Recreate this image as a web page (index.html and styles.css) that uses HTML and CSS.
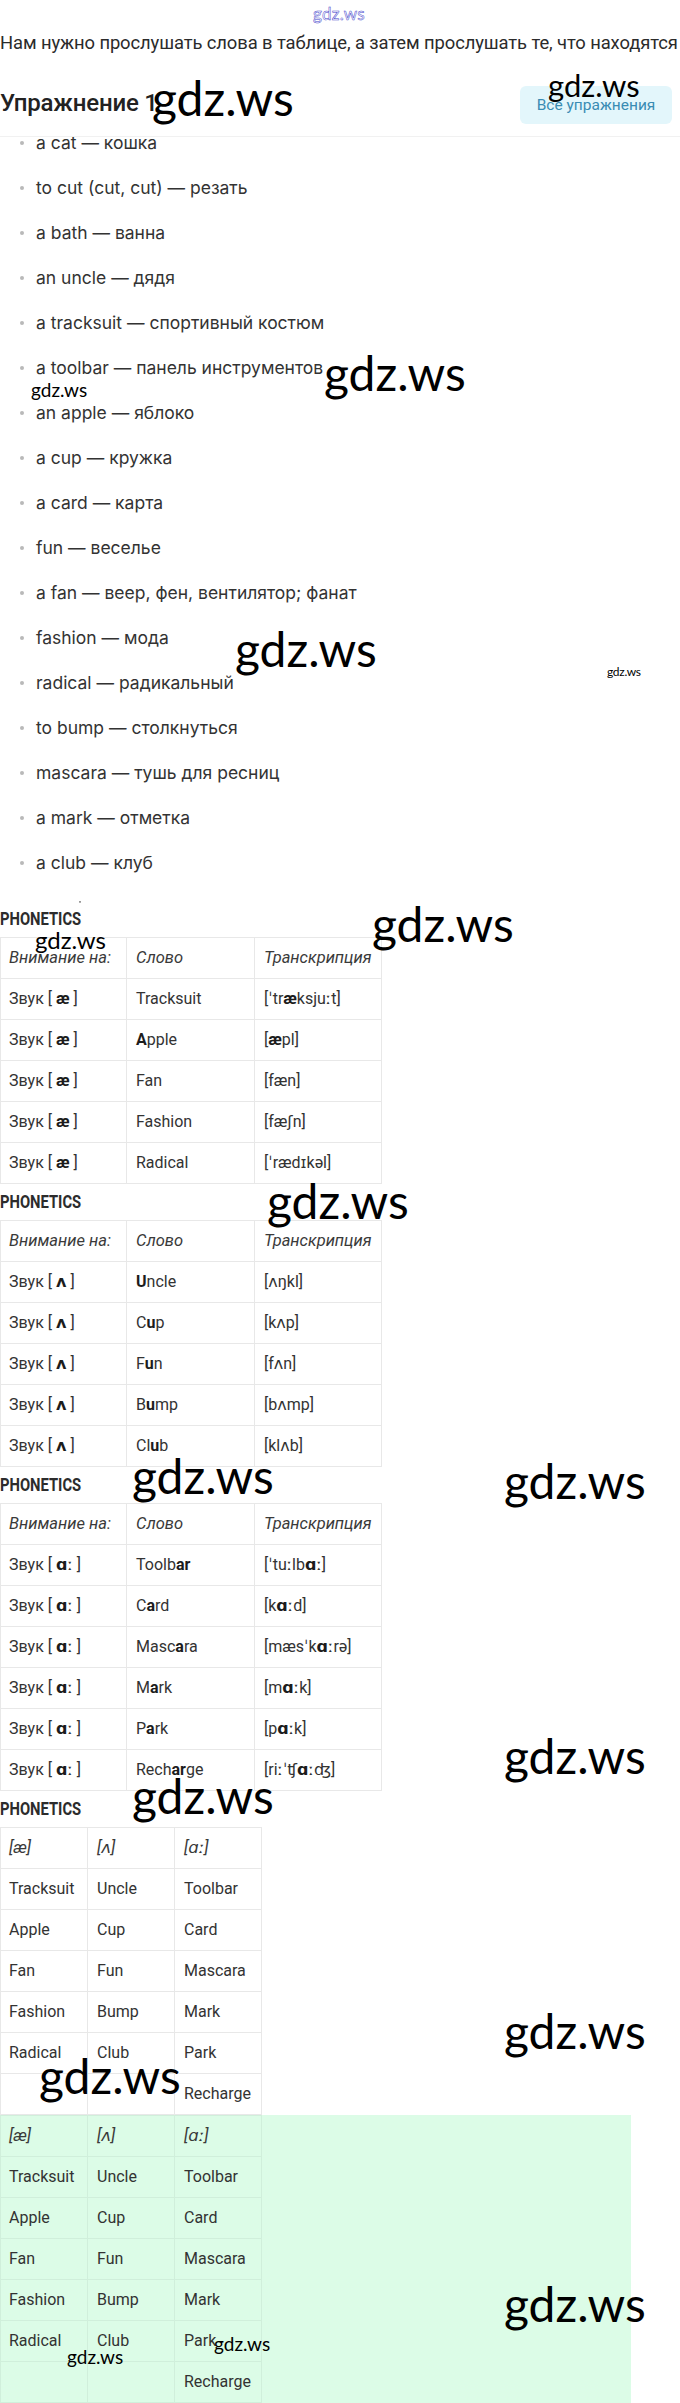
FILE: index.html
```html
<!DOCTYPE html>
<html lang="ru">
<head>
<meta charset="utf-8">
<title>Упражнение 1</title>
<link rel="stylesheet" href="styles.css">
</head>
<body>
<div class="page">
  <p class="intro">Нам нужно прослушать слова в таблице, а затем прослушать те, что находятся</p>
  <header class="bar">
    <h1 class="title">Упражнение 1</h1>
    <a class="btn">Все упражнения</a>
  </header>
  <ul class="words">
    <li>a cat — кошка</li>
    <li>to cut (cut, cut) — резать</li>
    <li>a bath — ванна</li>
    <li>an uncle — дядя</li>
    <li>a tracksuit — спортивный костюм</li>
    <li>a toolbar — панель инструментов</li>
    <li>an apple — яблоко</li>
    <li>a cup — кружка</li>
    <li>a card — карта</li>
    <li>fun — веселье</li>
    <li>a fan — веер, фен, вентилятор; фанат</li>
    <li>fashion — мода</li>
    <li>radical — радикальный</li>
    <li>to bump — столкнуться</li>
    <li>mascara — тушь для ресниц</li>
    <li>a mark — отметка</li>
    <li>a club — клуб</li>
  </ul>
  <div class="gap"><span class="speck"></span></div>

  <h2 class="ph"><span>PHONETICS</span></h2>
  <table class="tbl wide">
    <colgroup><col class="c1"><col class="c2"><col class="c3"></colgroup>
    <tr class="head"><td>Внимание на:</td><td>Слово</td><td>Транскрипция</td></tr>
    <tr><td>Звук [ <b>æ</b> ]</td><td>Tracksuit</td><td>[ˈtr<b>æ</b>ksjuːt]</td></tr>
    <tr><td>Звук [ <b>æ</b> ]</td><td><b>A</b>pple</td><td>[<b>æ</b>pl]</td></tr>
    <tr><td>Звук [ <b>æ</b> ]</td><td>Fan</td><td>[fæn]</td></tr>
    <tr><td>Звук [ <b>æ</b> ]</td><td>Fashion</td><td>[fæʃn]</td></tr>
    <tr><td>Звук [ <b>æ</b> ]</td><td>Radical</td><td>[ˈrædɪkəl]</td></tr>
  </table>

  <h2 class="ph"><span>PHONETICS</span></h2>
  <table class="tbl wide">
    <colgroup><col class="c1"><col class="c2"><col class="c3"></colgroup>
    <tr class="head"><td>Внимание на:</td><td>Слово</td><td>Транскрипция</td></tr>
    <tr><td>Звук [ <b>ʌ</b> ]</td><td><b>U</b>ncle</td><td>[ʌŋkl]</td></tr>
    <tr><td>Звук [ <b>ʌ</b> ]</td><td>C<b>u</b>p</td><td>[kʌp]</td></tr>
    <tr><td>Звук [ <b>ʌ</b> ]</td><td>F<b>u</b>n</td><td>[fʌn]</td></tr>
    <tr><td>Звук [ <b>ʌ</b> ]</td><td>B<b>u</b>mp</td><td>[bʌmp]</td></tr>
    <tr><td>Звук [ <b>ʌ</b> ]</td><td>Cl<b>u</b>b</td><td>[klʌb]</td></tr>
  </table>

  <h2 class="ph"><span>PHONETICS</span></h2>
  <table class="tbl wide">
    <colgroup><col class="c1"><col class="c2"><col class="c3"></colgroup>
    <tr class="head"><td>Внимание на:</td><td>Слово</td><td>Транскрипция</td></tr>
    <tr><td>Звук [ <b>ɑ</b>ː ]</td><td>Toolb<b>ar</b></td><td>[ˈtuːlb<b>ɑ</b>ː]</td></tr>
    <tr><td>Звук [ <b>ɑ</b>ː ]</td><td>C<b>a</b>rd</td><td>[k<b>ɑ</b>ːd]</td></tr>
    <tr><td>Звук [ <b>ɑ</b>ː ]</td><td>Masc<b>a</b>ra</td><td>[mæsˈk<b>ɑ</b>ːrə]</td></tr>
    <tr><td>Звук [ <b>ɑ</b>ː ]</td><td>M<b>a</b>rk</td><td>[m<b>ɑ</b>ːk]</td></tr>
    <tr><td>Звук [ <b>ɑ</b>ː ]</td><td>P<b>a</b>rk</td><td>[p<b>ɑ</b>ːk]</td></tr>
    <tr><td>Звук [ <b>ɑ</b>ː ]</td><td>Rech<b>ar</b>ge</td><td>[riːˈʧ<b>ɑ</b>ːʤ]</td></tr>
  </table>

  <h2 class="ph"><span>PHONETICS</span></h2>
  <table class="tbl narrow">
    <colgroup><col class="n"><col class="n"><col class="n"></colgroup>
    <tr class="head"><td>[æ]</td><td>[ʌ]</td><td>[ɑː]</td></tr>
    <tr><td>Tracksuit</td><td>Uncle</td><td>Toolbar</td></tr>
    <tr><td>Apple</td><td>Cup</td><td>Card</td></tr>
    <tr><td>Fan</td><td>Fun</td><td>Mascara</td></tr>
    <tr><td>Fashion</td><td>Bump</td><td>Mark</td></tr>
    <tr><td>Radical</td><td>Club</td><td>Park</td></tr>
    <tr><td></td><td></td><td>Recharge</td></tr>
  </table>

  <div class="green">
    <table class="tbl narrow mint">
      <colgroup><col class="n"><col class="n"><col class="n"></colgroup>
      <tr class="head"><td>[æ]</td><td>[ʌ]</td><td>[ɑː]</td></tr>
      <tr><td>Tracksuit</td><td>Uncle</td><td>Toolbar</td></tr>
      <tr><td>Apple</td><td>Cup</td><td>Card</td></tr>
      <tr><td>Fan</td><td>Fun</td><td>Mascara</td></tr>
      <tr><td>Fashion</td><td>Bump</td><td>Mark</td></tr>
      <tr><td>Radical</td><td>Club</td><td>Park</td></tr>
      <tr><td></td><td></td><td>Recharge</td></tr>
    </table>
  </div>

  <div class="marks" aria-hidden="true">
    <span class="wm top">gdz.ws</span>
    <span class="wm xl w2">gdz.ws</span>
    <span class="wm l w3">gdz.ws</span>
    <span class="wm xl w4">gdz.ws</span>
    <span class="wm s w5">gdz.ws</span>
    <span class="wm xl w6">gdz.ws</span>
    <span class="wm xs w7">gdz.ws</span>
    <span class="wm xl w8">gdz.ws</span>
    <span class="wm m w8b">gdz.ws</span>
    <span class="wm xl w9">gdz.ws</span>
    <span class="wm xl w10">gdz.ws</span>
    <span class="wm xl w11">gdz.ws</span>
    <span class="wm xl w12">gdz.ws</span>
    <span class="wm xl w13">gdz.ws</span>
    <span class="wm xl w14">gdz.ws</span>
    <span class="wm xl w15">gdz.ws</span>
    <span class="wm xl w16">gdz.ws</span>
    <span class="wm s w17">gdz.ws</span>
    <span class="wm s w18">gdz.ws</span>
  </div>
</div>
</body>
</html>
```

FILE: styles.css
```css
* { box-sizing: border-box; }
html, body { margin: 0; padding: 0; background: #fff; }
body { width: 680px; overflow: hidden; }

.page {
  position: relative;
  width: 680px;
  padding-top: 32px;
  color: #333;
  font-family: Roboto, "Noto Sans", sans-serif;
}

.intro {
  margin: 0;
  font-size: 18.4px;
  line-height: 22px;
  white-space: nowrap;
  color: #2b2b2b;
  letter-spacing: -0.1px;
}

.bar {
  position: relative;
  z-index: 1;
  margin-top: 16px;
  height: 67px;
  padding-right: 8px;
  display: flex;
  align-items: center;
  justify-content: space-between;
  background: #fff;
  border-bottom: 1px solid #f1f1f1;
}
.title {
  margin: 0;
  font-size: 24px;
  font-weight: 500;
  color: #222;
  letter-spacing: -0.2px;
}
.btn {
  display: flex;
  align-items: center;
  justify-content: center;
  width: 152px;
  height: 38px;
  margin-top: 4px;
  border-radius: 6px;
  background: #e3f6fb;
  color: #3a8cb3;
  font-size: 15.5px;
}

.words {
  list-style: none;
  margin: -17px 0 0;
  padding: 0 0 0 36px;
  font-family: Inter, "Noto Sans", sans-serif;
  font-size: 17.5px;
  color: #333;
}
.words li {
  position: relative;
  line-height: 25px;
  padding: 10px 0;
}
.words li::before {
  content: "";
  position: absolute;
  left: -16px;
  top: 21px;
  width: 4px;
  height: 4px;
  border-radius: 50%;
  background: #b9b9b9;
}

.gap { height: 16px; position: relative; }
.speck {
  display: block;
  margin-left: 79px;
  padding-top: 14px;
  width: 2px;
  height: 2px;
  box-sizing: content-box;
  background: transparent;
  border-bottom: 2px solid #999;
  border-radius: 1px;
}

.ph {
  margin: 0;
  height: 36px;
  line-height: 36px;
  font-size: 18px;
  font-weight: 700;
  color: #2c2c2c;
  white-space: nowrap;
}
.ph span {
  display: inline-block;
  transform: scaleX(0.82);
  transform-origin: left center;
}

.tbl {
  border-collapse: collapse;
  table-layout: fixed;
  font-family: Roboto, "DejaVu Sans", sans-serif;
  font-size: 16px;
  color: #333;
}
.tbl td {
  border: 1px solid #e8e8e8;
  padding: 10px 8px;
  line-height: 20px;
  height: 41px;
  white-space: nowrap;
  vertical-align: middle;
}
.tbl b { font-weight: 700; color: #1c1c1c; }
.tbl .head td { font-style: italic; color: #3a3a3a; font-size: 16.5px; }
.tbl td:nth-child(n+2) { padding-left: 9px; }

.wide { width: 381px; }
.wide .c1 { width: 126px; }
.wide .c2 { width: 128px; }
.wide .c3 { width: 127px; }

.narrow { width: 262px; }
.narrow .n { width: 87px; }

.green {
  width: 631px;
  background: #dcfce7;
}
.mint td { border-color: #d0efdb; }

/* watermarks laid over the page */
.marks { position: absolute; left: 0; top: 0; width: 680px; height: 2403px; pointer-events: none; z-index: 5; }
.wm {
  position: absolute;
  font-family: Lato, "Open Sans", sans-serif;
  line-height: 1;
  color: #000;
  white-space: nowrap;
}
.wm.top {
  left: 313px; top: 5px;
  font-size: 17px;
  color: #fff;
  -webkit-text-stroke: 0.5px #4444cc;
  letter-spacing: 0.3px;
}
.wm.xl { font-size: 48px; }
.wm.l { font-size: 31px; }
.wm.m { font-size: 24px; }
.wm.s { font-size: 19px; }
.wm.xs { font-size: 12px; letter-spacing: -0.3px; }

.w2 { left: 152px; top: 74px; }
.w3 { left: 548px; top: 70px; }
.w4 { left: 324px; top: 349px; }
.w5 { left: 31px; top: 380px; }
.w6 { left: 235px; top: 625px; }
.w7 { left: 607px; top: 666px; }
.w8 { left: 372px; top: 900px; }
.w8b { left: 35px; top: 928px; }
.w9 { left: 267px; top: 1177px; }
.w10 { left: 132px; top: 1452px; }
.w11 { left: 504px; top: 1457px; }
.w12 { left: 504px; top: 1732px; }
.w13 { left: 132px; top: 1772px; }
.w14 { left: 504px; top: 2007px; }
.w15 { left: 39px; top: 2052px; }
.w16 { left: 504px; top: 2280px; }
.w17 { left: 67px; top: 2347px; }
.w18 { left: 214px; top: 2334px; }
```
